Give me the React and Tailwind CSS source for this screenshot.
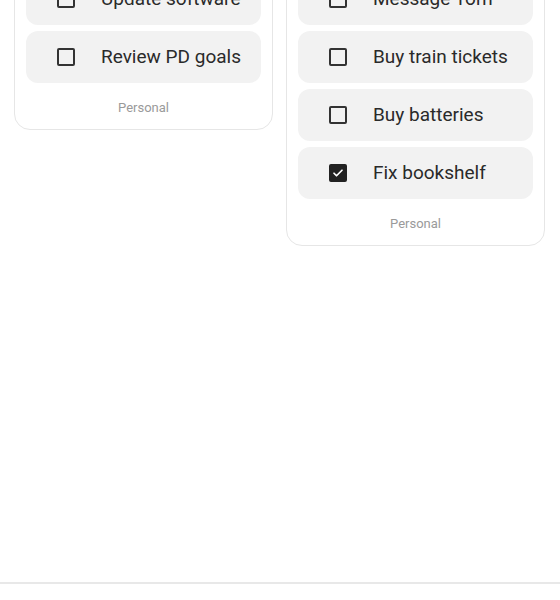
import React, { useState } from "react";

const CheckBox = ({ checked }) => (
  <span
    className={
      "flex h-[18px] w-[18px] shrink-0 items-center justify-center rounded-[2px] border-2 " +
      (checked ? "border-[#222] bg-[#222]" : "border-[#333] bg-transparent")
    }
  >
    {checked && (
      <svg width="12" height="12" viewBox="0 0 24 24" fill="none">
        <path d="M4 12.5l5 5L20 6.5" stroke="#fff" strokeWidth="3.4" strokeLinecap="round" strokeLinejoin="round" />
      </svg>
    )}
  </span>
);

const TaskCard = ({ tasks, label, onToggle }) => (
  <div className="flex w-[259px] flex-col rounded-2xl border border-[#e6e6e6] bg-white p-[11px]">
    <div className="flex flex-col gap-[6px]">
      {tasks.map((task) => (
        <button
          key={task.id}
          onClick={() => onToggle(task.id)}
          className="flex h-[52px] items-center gap-[26px] rounded-xl bg-[#f2f2f2] pl-[31px] text-left"
        >
          <CheckBox checked={task.done} />
          <span className="text-[19px] text-[#2a2a2a]">{task.title}</span>
        </button>
      ))}
    </div>
    <div className="pt-[16px] pb-[1px] text-center text-[13px] leading-[18px] text-[#9a9a9a]">{label}</div>
  </div>
);

export default function App() {
  const [left, setLeft] = useState([
    { id: 1, title: "Update software", done: false },
    { id: 2, title: "Review PD goals", done: false },
  ]);
  const [right, setRight] = useState([
    { id: 3, title: "Message Tom", done: false },
    { id: 4, title: "Buy train tickets", done: false },
    { id: 5, title: "Buy batteries", done: false },
    { id: 6, title: "Fix bookshelf", done: true },
  ]);

  const toggle = (setter) => (id) =>
    setter((list) => list.map((t) => (t.id === id ? { ...t, done: !t.done } : t)));

  return (
    <div className="flex h-[600px] flex-col overflow-hidden bg-white" style={{ fontFamily: "Roboto, 'Noto Sans', sans-serif" }}>
      <div className="flex-1 overflow-hidden">
        <div className="-mt-[39px] flex items-start gap-[13px] px-[14px]">
          <TaskCard tasks={left} label="Personal" onToggle={toggle(setLeft)} />
          <TaskCard tasks={right} label="Personal" onToggle={toggle(setRight)} />
        </div>
      </div>
      <div className="h-[18px] shrink-0 border-t-2 border-[#e8e8e8] bg-white" />
    </div>
  );
}
